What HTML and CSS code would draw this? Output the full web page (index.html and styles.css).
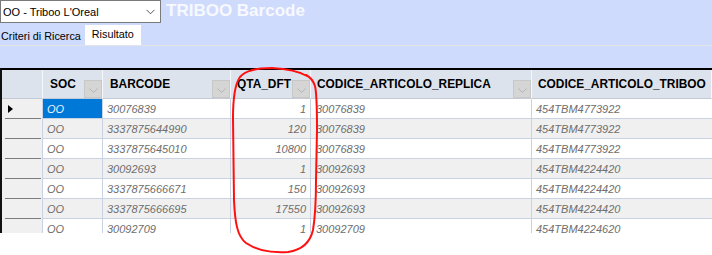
FILE: index.html
```html
<!DOCTYPE html>
<html>
<head>
<meta charset="utf-8">
<link rel="stylesheet" href="styles.css">
</head>
<body>
<div class="app">
  <div class="topbar">
    <div class="combo">
      <span class="combo-text">OO - Triboo L'Oreal</span>
      <svg class="combo-arrow" width="9" height="6" viewBox="0 0 9 6"><path d="M0.5 0.8 L4.5 4.8 L8.5 0.8" fill="none" stroke="#555" stroke-width="1"/></svg>
    </div>
    <div class="title">TRIBOO Barcode</div>
  </div>
  <div class="tabs">
    <div class="tab">Criteri di Ricerca</div>
    <div class="tab active">Risultato</div>
  </div>
  <div class="tabline"></div>
  <div class="spacer"></div>
  <div class="grid">
    <div class="row head">
      <div class="c rh"></div>
      <div class="c soc">SOC<span class="fbtn"><svg width="9" height="5" viewBox="0 0 9 5"><path d="M0.5 0.5 L4.5 4.5 L8.5 0.5" fill="none" stroke="#b4b4b4" stroke-width="1"/></svg></span></div>
      <div class="c bar">BARCODE<span class="fbtn"><svg width="9" height="5" viewBox="0 0 9 5"><path d="M0.5 0.5 L4.5 4.5 L8.5 0.5" fill="none" stroke="#b4b4b4" stroke-width="1"/></svg></span></div>
      <div class="c qta">QTA_DFT<span class="fbtn"><svg width="9" height="5" viewBox="0 0 9 5"><path d="M0.5 0.5 L4.5 4.5 L8.5 0.5" fill="none" stroke="#b4b4b4" stroke-width="1"/></svg></span></div>
      <div class="c rep">CODICE_ARTICOLO_REPLICA<span class="fbtn"><svg width="9" height="5" viewBox="0 0 9 5"><path d="M0.5 0.5 L4.5 4.5 L8.5 0.5" fill="none" stroke="#b4b4b4" stroke-width="1"/></svg></span></div>
      <div class="c tri">CODICE_ARTICOLO_TRIBOO</div>
    </div>
    <div class="row">
      <div class="c rh"><span class="marker"></span></div>
      <div class="c soc sel">OO</div>
      <div class="c bar">30076839</div>
      <div class="c qta">1</div>
      <div class="c rep">30076839</div>
      <div class="c tri">454TBM4773922</div>
    </div>
    <div class="row alt">
      <div class="c rh"></div>
      <div class="c soc">OO</div>
      <div class="c bar">3337875644990</div>
      <div class="c qta">120</div>
      <div class="c rep">30076839</div>
      <div class="c tri">454TBM4773922</div>
    </div>
    <div class="row">
      <div class="c rh"></div>
      <div class="c soc">OO</div>
      <div class="c bar">3337875645010</div>
      <div class="c qta">10800</div>
      <div class="c rep">30076839</div>
      <div class="c tri">454TBM4773922</div>
    </div>
    <div class="row alt">
      <div class="c rh"></div>
      <div class="c soc">OO</div>
      <div class="c bar">30092693</div>
      <div class="c qta">1</div>
      <div class="c rep">30092693</div>
      <div class="c tri">454TBM4224420</div>
    </div>
    <div class="row">
      <div class="c rh"></div>
      <div class="c soc">OO</div>
      <div class="c bar">3337875666671</div>
      <div class="c qta">150</div>
      <div class="c rep">30092693</div>
      <div class="c tri">454TBM4224420</div>
    </div>
    <div class="row alt">
      <div class="c rh"></div>
      <div class="c soc">OO</div>
      <div class="c bar">3337875666695</div>
      <div class="c qta">17550</div>
      <div class="c rep">30092693</div>
      <div class="c tri">454TBM4224420</div>
    </div>
    <div class="row">
      <div class="c rh"></div>
      <div class="c soc">OO</div>
      <div class="c bar">30092709</div>
      <div class="c qta">1</div>
      <div class="c rep">30092709</div>
      <div class="c tri">454TBM4224620</div>
    </div>
  </div>
</div>
<svg class="annot" width="712" height="255" viewBox="0 0 712 255">
  <path d="M307 76 C 300 72, 290 69, 272 68 C 256 68, 245 71, 240 77 C 235 84, 233 96, 233 118 L 234 200 C 235 222, 237 236, 246 243 C 256 250, 272 253, 288 252 C 302 250, 310 243, 313 230 C 315 218, 316 200, 316 180 L 317 130 C 317 108, 317 94, 315 86 C 313 80, 310 77, 306 75" fill="none" stroke="#ff1010" stroke-width="2" stroke-linecap="round" stroke-linejoin="round"/>
</svg>
</body>
</html>
```
FILE: styles.css
```css
html, body {
  margin: 0;
  padding: 0;
  background: #ffffff;
}
body {
  width: 712px;
  height: 255px;
  overflow: hidden;
  position: relative;
  font-family: "Liberation Sans", Arial, sans-serif;
}
.app {
  background: #cfdbfd;
  display: flex;
  flex-direction: column;
}
.topbar {
  height: 24px;
  display: flex;
  align-items: flex-start;
}
.combo {
  box-sizing: border-box;
  width: 161px;
  height: 23px;
  background: #ffffff;
  border: 1px solid #7a7a7a;
  display: flex;
  align-items: center;
  justify-content: space-between;
  padding: 0 5px 0 2px;
  font-size: 11px;
  color: #000;
}
.combo-arrow {
  display: block;
}
.title {
  margin-left: 5px;
  margin-top: 1px;
  font-size: 17px;
  font-weight: bold;
  color: #f7f9ff;
  line-height: 20px;
}
.tabs {
  height: 21px;
  display: flex;
  align-items: stretch;
}
.tab {
  font-size: 10.8px;
  color: #000;
  padding: 0 4px 0 1px;
  display: flex;
  align-items: center;
  padding-top: 3px;
}
.tab.active {
  background: #ffffff;
  margin-left: 0;
  padding: 0 8px 3px 8px;
  margin-top: 1px;
  width: 40px;
  justify-content: center;
}
.tabline {
  height: 1px;
  background: #e2e4ea;
}
.spacer {
  height: 22px;
}
.grid {
  height: 165px;
  overflow: hidden;
  box-sizing: border-box;
  border-top: 2px solid #000;
  border-left: 2px solid #111;
  background: #ffffff;
  display: flex;
  flex-direction: column;
}
.row {
  display: flex;
  height: 20px;
  flex: none;
  background: #ffffff;
}
.row.alt {
  background: #f0f0f0;
}
.c {
  box-sizing: border-box;
  height: 100%;
  border-right: 1px solid #c9d2e2;
  border-bottom: 1px solid #c9d2e2;
  display: flex;
  align-items: center;
  font-size: 11px;
  font-style: italic;
  color: #6e6e6e;
  padding-left: 4px;
  white-space: nowrap;
  position: relative;
  flex: none;
}
.rh { width: 41px; padding-left: 0; }
.soc { width: 60px; }
.bar { width: 128px; }
.qta { width: 80px; justify-content: flex-end; padding-right: 4px; }
.rep { width: 221px; padding-left: 5px; }
.tri { flex: 1 1 auto; border-right: none; }

.row .rh {
  background: #f0f0f0;
  border-bottom: none;
}
.row .rh::after {
  content: "";
  position: absolute;
  left: 3px;
  right: 1px;
  bottom: 0;
  height: 1px;
  background: #7c7c7c;
}
.marker {
  width: 0;
  height: 0;
  margin-left: 6px;
  border-left: 5px solid #000;
  border-top: 4.5px solid transparent;
  border-bottom: 4.5px solid transparent;
}
.sel {
  background: #0078d7;
  color: #eaf2ff;
}

.row.head {
  height: 29px;
  background: #dde3ec;
}
.head .c {
  font-style: normal;
  font-weight: bold;
  font-size: 11.9px;
  color: #000;
  padding-left: 7px;
  border-right: 1px solid #f5f7fb;
  border-bottom: 1px solid #c3cad6;
  justify-content: flex-start;
}
.head .rh {
  background: #dde3ec;
  border-bottom: 1px solid #c3cad6;
}
.head .rh::after { display: none; }
.head .qta { padding-left: 6px; }
.head .rep { padding-left: 6px; }
.head .tri { padding-left: 6px; }
.fbtn {
  position: absolute;
  right: 0;
  bottom: 0;
  box-sizing: border-box;
  width: 18px;
  height: 18px;
  background: #d5d5d5;
  border: 1px solid #c8c8c8;
  display: flex;
  align-items: center;
  justify-content: center;
}
.fbtn svg { display: block; margin-top: 2px; }

.annot {
  position: absolute;
  left: 0;
  top: 0;
  pointer-events: none;
}
```
